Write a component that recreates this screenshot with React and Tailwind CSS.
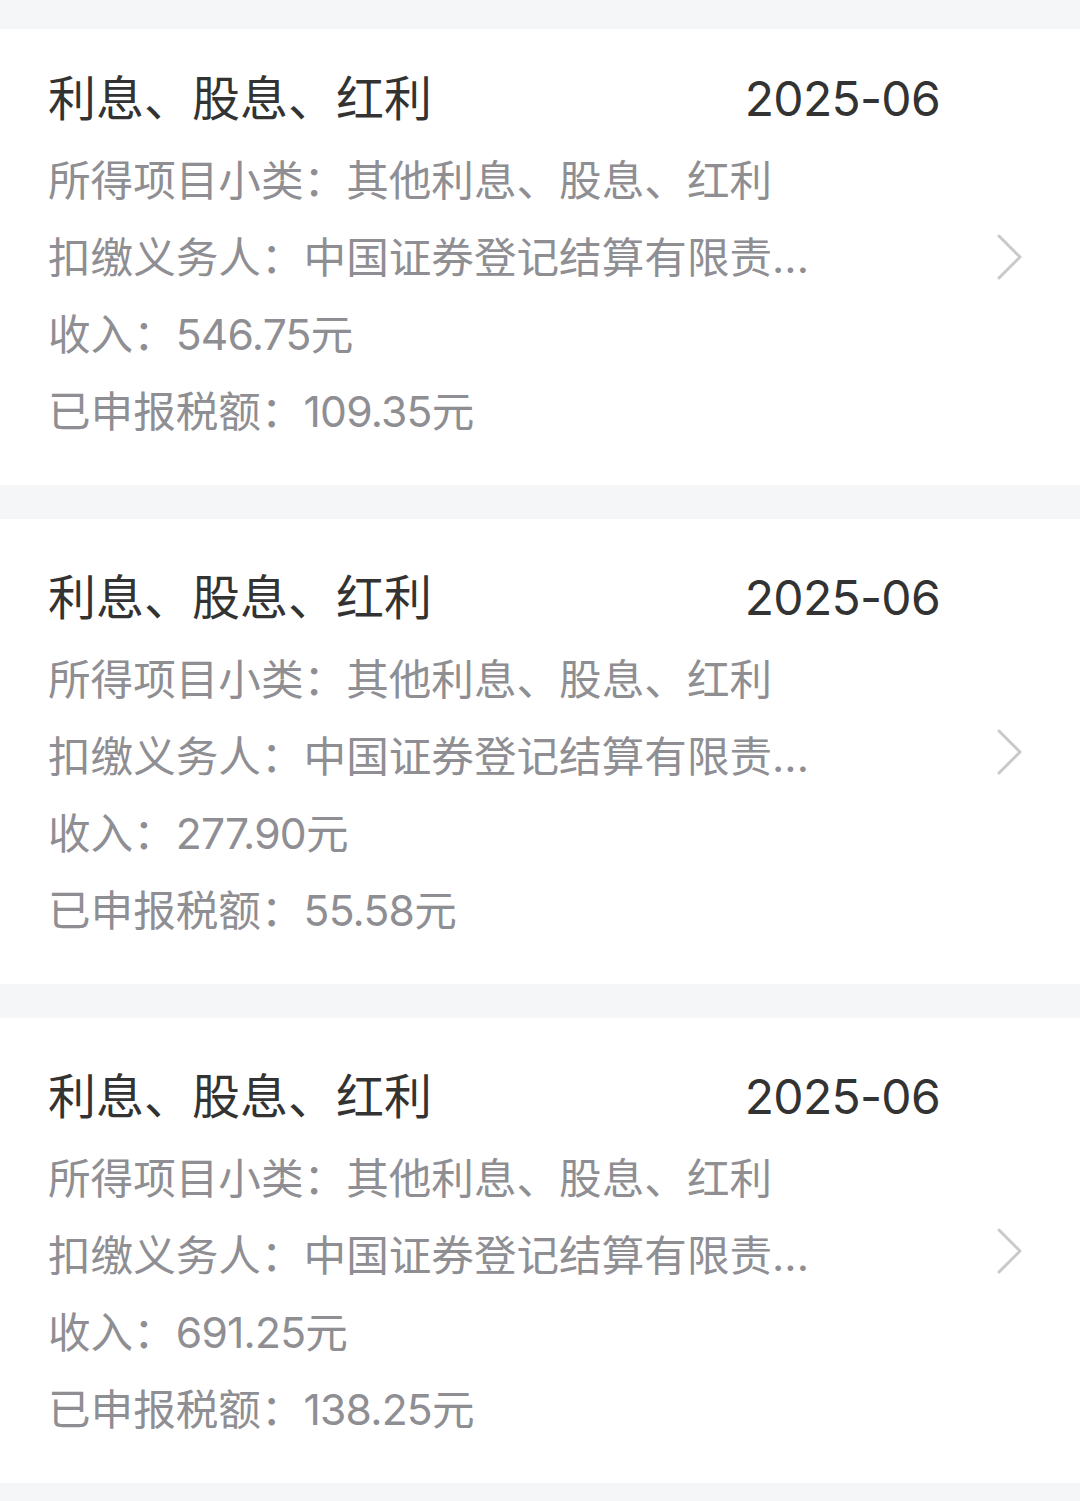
const records = [
  { income: '546.75', tax: '109.35', first: true },
  { income: '277.90', tax: '55.58' },
  { income: '691.25', tax: '138.25' },
];

function Chevron() {
  return (
    <svg width="30" height="48" viewBox="0 0 30 48" fill="none">
      <path
        d="M4 3 L25 24 L4 45"
        stroke="#c9c9cc"
        strokeWidth="3"
        strokeLinecap="round"
        strokeLinejoin="round"
      />
    </svg>
  );
}

function RecordCard({ record }) {
  return (
    <div className="flex bg-white pl-[48px]">
      <div className={`w-[892px] pb-[35px] ${record.first ? 'pt-[42px]' : 'pt-[51px]'}`}>
        <div className="flex items-center justify-between text-[48px] leading-[56px] text-[#333333]">
          <span>利息、股息、红利</span>
          <span className="tracking-[-0.7px]">2025-06</span>
        </div>
        <div className="mt-[15px] text-[42.6px] leading-[77px] text-[#8e8e93]">
          <div>所得项目小类：其他利息、股息、红利</div>
          <div>扣缴义务人：中国证券登记结算有限责...</div>
          <div>
            收入：<span className="tracking-[-0.8px]">{record.income}</span>元
          </div>
          <div>
            已申报税额：<span className="tracking-[-0.8px]">{record.tax}</span>元
          </div>
        </div>
      </div>
      <div className="flex items-center pl-[55px]">
        <Chevron />
      </div>
    </div>
  );
}

export default function App() {
  return (
    <div className="min-h-[1501px] w-[1080px] overflow-hidden bg-[#f5f6f8] pt-[29px] font-[Inter,'Noto_Sans_CJK_SC',sans-serif]">
      <div className="flex flex-col gap-[34px]">
        {records.map((r, i) => (
          <RecordCard key={i} record={r} />
        ))}
      </div>
    </div>
  );
}
